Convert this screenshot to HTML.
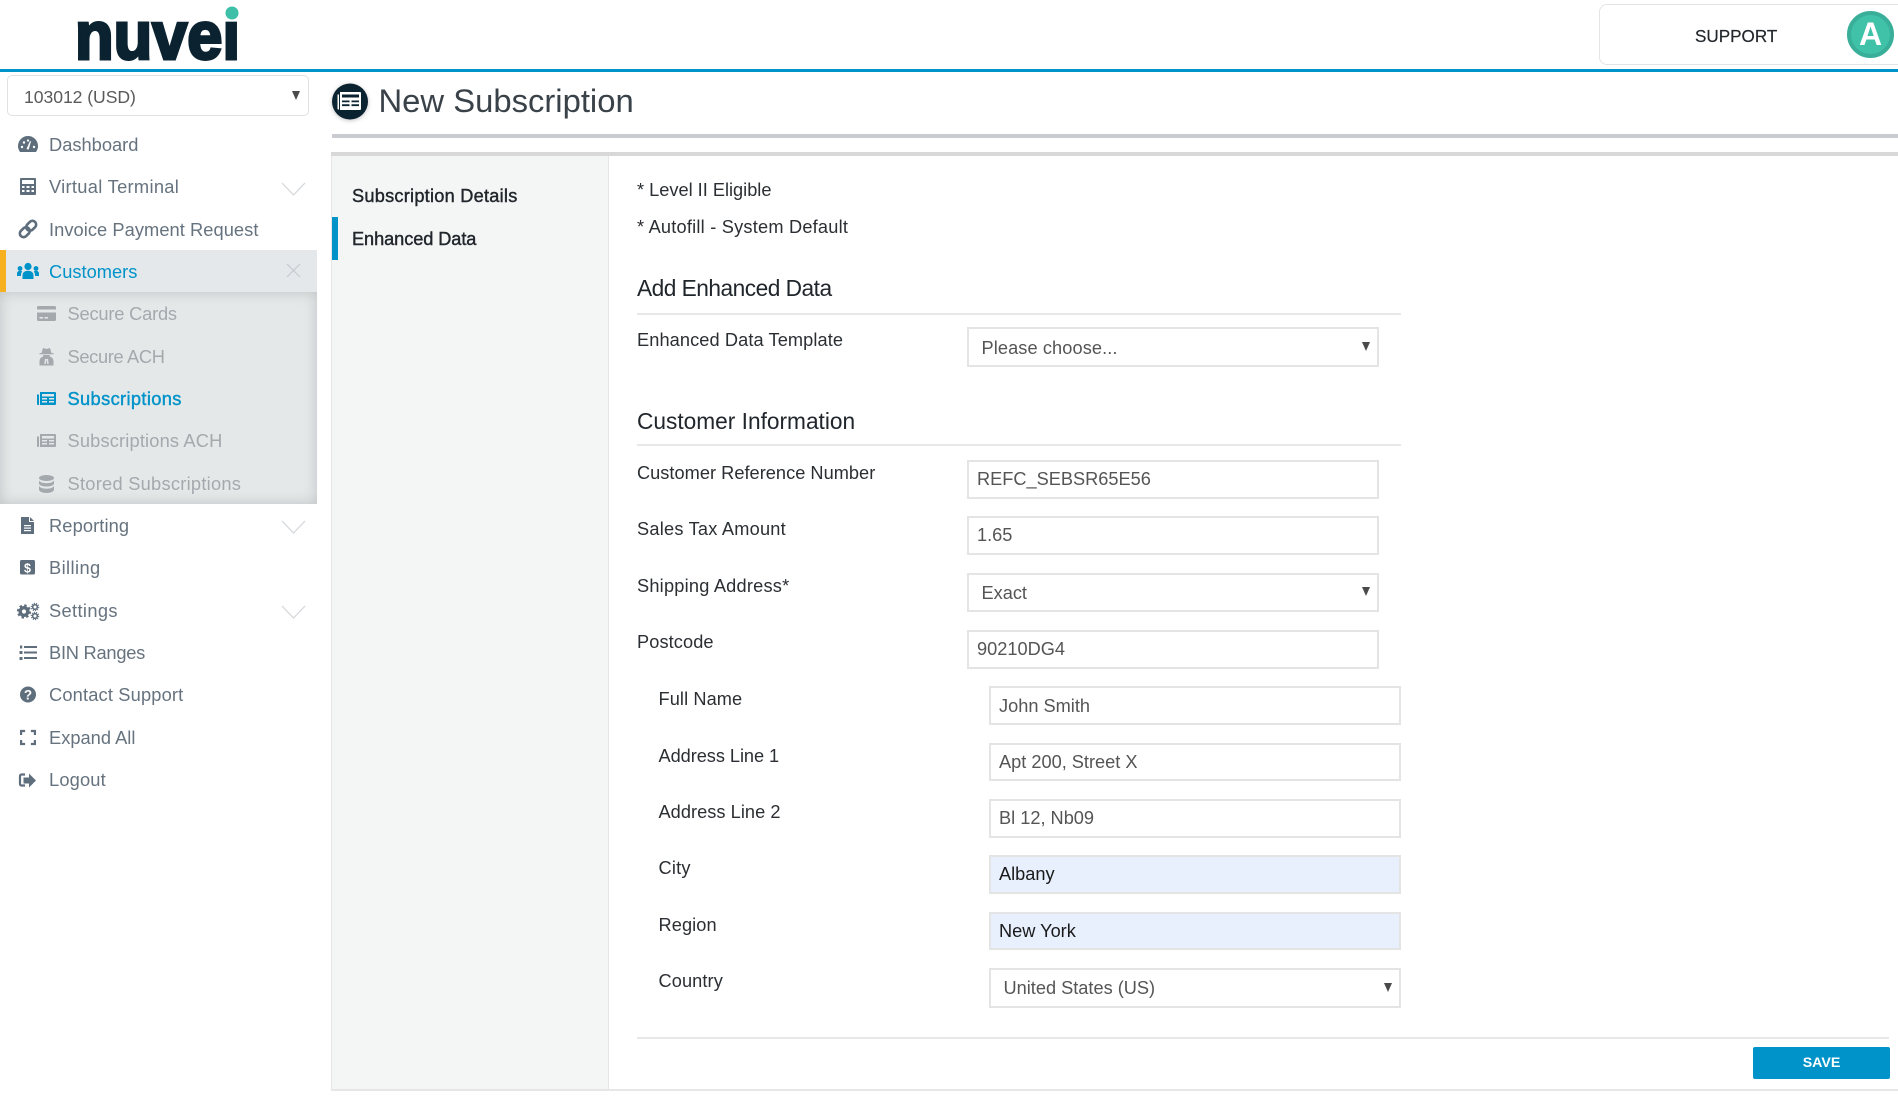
<!DOCTYPE html>
<html lang="en"><head><meta charset="utf-8"><title>New Subscription</title>
<style>
html,body{margin:0;padding:0;background:#fff;width:1898px;height:1116px;overflow:hidden}
body{position:relative;font-family:"Liberation Sans",Arial,sans-serif;font-size:18.2px;color:#2b2f33}
div{position:absolute;box-sizing:border-box;white-space:nowrap}
.t{line-height:24px;height:24px}
.n{left:49px;color:#66737f;line-height:24px;height:24px;font-size:18.3px}
.s{left:67.5px;color:#a3a9ad;line-height:24px;height:24px;font-size:18.3px}
.l{left:637px;color:#2b2f33;line-height:24px;height:24px}
.l2{left:658.5px;color:#2b2f33;line-height:24px;height:24px}
.f{left:967px;width:412px;border:2px solid #e4e4e4;background:#fff;color:#555;line-height:34px}
.f2{left:989px;width:412px;border:2px solid #e4e4e4;background:#fff;color:#555;line-height:34px}
.f span,.f2 span{position:absolute;left:8px;top:0}
.sel span{left:12.5px;top:1px}
.auto{background:#e8f0fe;color:#1a1a1a}
.r{height:2px;background:#e8e8e8}
.h{left:637px;font-size:22.7px;color:#20262b;line-height:28px;height:28px}
.a{width:0;height:0;border-left:4.5px solid transparent;border-right:4.5px solid transparent;border-top:9px solid #4a4a4a}
svg{position:absolute;left:0;top:0}
</style></head><body>

<!-- sidebar backgrounds -->
<div style="left:0;top:250px;width:317px;height:42px;background:#e4e8eb"></div>
<div style="left:0;top:250px;width:6px;height:42px;background:#f7b01f"></div>
<div style="left:0;top:292px;width:317px;height:212px;background:#e4e8e9;box-shadow:inset 0 0 14px rgba(0,0,0,.16)"></div>

<!-- header -->
<div style="left:0;top:69px;width:1898px;height:3px;background:#0093c9"></div>
<div style="left:1599px;top:4px;width:320px;height:61px;border:1.5px solid #e4e4e4;border-radius:8px;background:#fff"></div>
<div class="t" style="left:1695px;top:25px;font-size:17.1px;color:#22272b;-webkit-text-stroke:.2px #22272b">SUPPORT</div>
<div style="left:1847px;top:11px;width:47px;height:47px;border-radius:50%;background:#40c2a9;border:4px solid #39ae99;color:#fff;font-size:32px;line-height:39px;text-align:center;font-weight:bold">A</div>

<!-- account select -->
<div style="left:7px;top:75px;width:302px;height:41px;border:1.5px solid #e1e1e1;border-radius:5px;background:#fff"></div>
<div class="t" style="left:24px;top:84.500px;color:#5a5a5a;font-size:17.6px;letter-spacing:-.05px">103012 (USD)</div>
<div class="a" style="left:292px;top:91px"></div>

<!-- sidebar text -->
<div class="n" style="top:133px">Dashboard</div>
<div class="n" style="top:175px;letter-spacing:.3px">Virtual Terminal</div>
<div class="n" style="top:218px;letter-spacing:.05px">Invoice Payment Request</div>
<div class="n" style="top:260px;color:#0093c9">Customers</div>
<div class="s" style="top:302px;letter-spacing:-.2px">Secure Cards</div>
<div class="s" style="top:345px;letter-spacing:-.35px">Secure ACH</div>
<div class="s" style="top:387px;color:#0093c9;-webkit-text-stroke:.4px #0093c9;letter-spacing:.35px">Subscriptions</div>
<div class="s" style="top:429px;letter-spacing:.15px">Subscriptions ACH</div>
<div class="s" style="top:472px;letter-spacing:.25px">Stored Subscriptions</div>
<div class="n" style="top:514px;letter-spacing:.1px">Reporting</div>
<div class="n" style="top:556px;letter-spacing:.4px">Billing</div>
<div class="n" style="top:599px;letter-spacing:.35px">Settings</div>
<div class="n" style="top:641px;letter-spacing:-.25px">BIN Ranges</div>
<div class="n" style="top:683px;letter-spacing:.15px">Contact Support</div>
<div class="n" style="top:726px">Expand All</div>
<div class="n" style="top:768px;letter-spacing:.15px">Logout</div>

<!-- title -->
<div style="left:378.500px;top:80px;font-size:32.8px;line-height:42px;height:42px;color:#3a4249">New Subscription</div>
<div style="left:332px;top:134px;width:1566px;height:4px;background:#c9ccd0"></div>

<!-- panel -->
<div style="left:331px;top:152px;width:1567px;height:4px;background:#d8d8d8"></div>
<div style="left:331px;top:156px;width:278px;height:934px;background:#f4f5f5;border-left:1px solid #e6e6e6;border-right:1px solid #e6e6e6"></div>
<div style="left:332px;top:217px;width:6px;height:43px;background:#0093c9"></div>
<div class="t" style="left:352px;top:184px;color:#20262b;-webkit-text-stroke:.4px #20262b;letter-spacing:.24px">Subscription Details</div>
<div class="t" style="left:352px;top:227px;color:#20262b;-webkit-text-stroke:.4px #20262b;letter-spacing:-.08px">Enhanced Data</div>
<div style="left:331px;top:1089px;width:1567px;height:2px;background:#e6e6e6"></div>

<!-- content -->
<div class="l" style="top:177.500px">* Level II Eligible</div>
<div class="l" style="top:215px;letter-spacing:.22px">* Autofill - System Default</div>

<div class="h" style="top:274px;letter-spacing:-.5px">Add Enhanced Data</div>
<div class="r" style="left:637px;top:313px;width:764px"></div>
<div class="l" style="top:328px;letter-spacing:.1px">Enhanced Data Template</div>
<div class="f sel" style="top:327px;height:40px"><span style="top:2px;letter-spacing:.1px">Please choose...</span></div>
<div class="a" style="left:1362px;top:342px"></div>

<div class="h" style="top:407px">Customer Information</div>
<div class="r" style="left:637px;top:444px;width:764px"></div>

<div class="l" style="top:461px;letter-spacing:.03px">Customer Reference Number</div>
<div class="f" style="top:460px;height:39px"><span>REFC_SEBSR65E56</span></div>
<div class="l" style="top:517px;letter-spacing:.23px">Sales Tax Amount</div>
<div class="f" style="top:516px;height:39px"><span>1.65</span></div>
<div class="l" style="top:573.500px;letter-spacing:.22px">Shipping Address*</div>
<div class="f sel" style="top:573px;height:39px"><span>Exact</span></div>
<div class="a" style="left:1362px;top:587px"></div>
<div class="l" style="top:630px;letter-spacing:.1px">Postcode</div>
<div class="f" style="top:630px;height:39px"><span>90210DG4</span></div>

<div class="l2" style="top:686.500px;letter-spacing:.1px">Full Name</div>
<div class="f2" style="top:686px;height:39px"><span style="top:1px">John Smith</span></div>
<div class="l2" style="top:744px;letter-spacing:-.05px">Address Line 1</div>
<div class="f2" style="top:743px;height:38px"><span>Apt 200, Street X</span></div>
<div class="l2" style="top:800px;letter-spacing:.05px">Address Line 2</div>
<div class="f2" style="top:799px;height:39px"><span>Bl 12, Nb09</span></div>
<div class="l2" style="top:856px;letter-spacing:.2px">City</div>
<div class="f2 auto" style="top:855px;height:39px"><span>Albany</span></div>
<div class="l2" style="top:913px;letter-spacing:.1px">Region</div>
<div class="f2 auto" style="top:912px;height:38px"><span>New York</span></div>
<div class="l2" style="top:969px;letter-spacing:.1px">Country</div>
<div class="f2 sel" style="top:968px;height:40px"><span>United States (US)</span></div>
<div class="a" style="left:1384px;top:983px"></div>

<div class="r" style="left:637px;top:1037px;width:1252px"></div>
<div style="left:1753px;top:1047px;width:137px;height:32px;background:#0093c9;border-radius:2px;color:#fff;font-weight:bold;font-size:14.2px;line-height:32px;text-align:center">SAVE</div>

<!-- logo + icons -->
<svg width="1898" height="1116" viewBox="0 0 1898 1116" xmlns="http://www.w3.org/2000/svg">
  <!-- logo -->
  <text x="75" y="59" font-family="Liberation Sans" font-weight="bold" font-size="68" textLength="165" lengthAdjust="spacingAndGlyphs" fill="#0b2230" stroke="#0b2230" stroke-width="3">nuvei</text>
  <rect x="218" y="0" width="24" height="21" fill="#fff"/>
  <ellipse cx="232" cy="13" rx="6.500" ry="6.500" fill="#3dbfa8"/>

  <g fill="#5f6e7c">
    <!-- dashboard -->
    <path d="M20 152a10 10 0 1 1 16 0z"/>
    <g fill="#fff"><circle cx="22" cy="147" r="1.200"/><circle cx="24" cy="142.500" r="1.200"/><circle cx="34" cy="147" r="1.200"/><circle cx="28" cy="140.500" r="1.100"/><path d="M26.500 149l3.500-8 1 .4-2.400 8.200z"/></g>
    <!-- calculator -->
    <path fill-rule="evenodd" d="M21 178h14a1 1 0 0 1 1 1v15a1 1 0 0 1-1 1H21a1 1 0 0 1-1-1v-15a1 1 0 0 1 1-1zm1 2v4h12v-4zm0 6v2h2.500v-2zm4.500 0v2h3v-2zm5 0v2H34v-2zm-9.500 4v2h2.500v-2zm4.500 0v2h3v-2zm5 0v2H34v-2z"/>
    <!-- link -->
    <g fill="none" stroke="#5f6e7c" stroke-width="2.600" transform="rotate(-45 28 229)"><rect x="18" y="225.300" width="11" height="7.400" rx="3.700"/><rect x="27" y="225.300" width="11" height="7.400" rx="3.700"/></g>
    <!-- file -->
    <path d="M21 517h8v5h5v12H21z"/><path d="M30 517l4 4h-4z"/><g fill="#fff"><rect x="24" y="525" width="7" height="1.200"/><rect x="24" y="527.500" width="7" height="1.200"/><rect x="24" y="530" width="7" height="1.200"/></g>
    <!-- billing -->
    <rect x="20" y="560" width="15" height="14.500" rx="1.500"/>
    <text x="27.500" y="572.500" font-family="Liberation Sans" font-weight="bold" font-size="12.500" text-anchor="middle" fill="#fff">$</text>
    <!-- list -->
    <g><rect x="24" y="646" width="13" height="2"/><rect x="24" y="651.500" width="13" height="2"/><rect x="24" y="657" width="13" height="2"/><rect x="20" y="645.500" width="2.200" height="3"/><rect x="19.500" y="651" width="3" height="3"/><rect x="19.500" y="657" width="3" height="3"/></g>
    <!-- question -->
    <circle cx="28" cy="694.500" r="8"/>
    <text x="28" y="699.500" font-family="Liberation Sans" font-weight="bold" font-size="13.500" text-anchor="middle" fill="#fff">?</text>
    <!-- expand -->
    <path fill="none" stroke="#5f6e7c" stroke-width="2.200" d="M21.100 735v-4h4M30.900 731h4v4M34.900 740v4h-4M25.100 744h-4v-4"/>
    <!-- logout -->
    <path fill="none" stroke="#5f6e7c" stroke-width="2.200" d="M25 774.500h-3.500a1.500 1.500 0 0 0-1.500 1.500v8a1.500 1.500 0 0 0 1.500 1.500H25"/>
    <path d="M23.500 777.500h5.500v-4l7 7-7 7v-4h-5.500z"/>
  </g>
  <!-- cogs -->
  <g fill="none" stroke="#5f6e7c">
    <circle cx="24" cy="611.500" r="3.800" stroke-width="3.400"/>
    <circle cx="24" cy="611.500" r="6" stroke-width="2.200" stroke-dasharray="2.400 2.312"/>
    <circle cx="35" cy="607" r="2.300" stroke-width="1.600"/>
    <circle cx="35" cy="607" r="3.700" stroke-width="1.100" stroke-dasharray="1.200 1.100"/>
    <circle cx="35" cy="616" r="2.300" stroke-width="1.600"/>
    <circle cx="35" cy="616" r="3.700" stroke-width="1.100" stroke-dasharray="1.200 1.100"/>
  </g>
  <!-- users -->
  <g fill="#0093c9">
    <circle cx="28" cy="266.500" r="3.600"/><circle cx="20" cy="268.500" r="2.400"/><circle cx="36" cy="268.500" r="2.400"/>
    <path d="M22.500 279v-3.500c0-3 2-4.800 5.500-4.800s5.500 1.800 5.500 4.800v3.500z"/>
    <path d="M17 276v-2.500c0-1.500 1-2.600 3-2.600 1 0 1.600.2 2.200.7-.9 1-1.300 2.300-1.300 4.400zM39 276v-2.500c0-1.500-1-2.600-3-2.600-1 0-1.600.2-2.200.7.900 1 1.300 2.300 1.300 4.400z"/>
  </g>
  <!-- sub icons -->
  <g fill="#a3a9ad">
    <path fill-rule="evenodd" d="M38.500 306h16a1.500 1.500 0 0 1 1.500 1.500v2H37v-2a1.500 1.500 0 0 1 1.500-1.500zM37 312.500h19v7a1.500 1.500 0 0 1-1.500 1.500h-16a1.500 1.500 0 0 1-1.500-1.500zm2.500 4.500v1.500h3.500V317zm5 0v1.500h3.500V317z"/>
    <g transform="translate(0 9.500)">
    <path d="M43 338.500l3.500 1 3.500-1 1.400 5h2.100v1.200h-14v-1.200h2.100z"/>
    <path fill-rule="evenodd" d="M39.500 356v-4c0-3 2-4.600 4-5.100l-.6-1.400h7.200l-.6 1.400c2 .5 4 2.100 4 5.100v4zM45 349.500l-.7 5h1.400l.8-4.500.8 4.500h1.400l-.7-5z"/>
    </g>
    <path fill-rule="evenodd" d="M40 434h15a1 1 0 0 1 1 1v11a1 1 0 0 1-1 1H40zm2 2v2.500h12V436zm0 4v1.500h5V440zm7 0v1.500h5V440zm-7 3v1.500h5V443zm7 0v1.500h5V443zM37 436.500h2V447h-1a1 1 0 0 1-1-1z"/>
    <ellipse cx="46.500" cy="478" rx="7.500" ry="3"/>
    <path d="M39 480.500c1 1.800 4 2.700 7.500 2.700s6.500-.9 7.500-2.700v3c0 1.700-3.300 3-7.500 3s-7.500-1.300-7.500-3zM39 486c1 1.800 4 2.700 7.500 2.700s6.500-.9 7.500-2.700v3.500c0 1.900-3.300 3.500-7.500 3.500s-7.500-1.600-7.500-3.500z"/>
  </g>
  <path fill="#0093c9" fill-rule="evenodd" d="M40 392h15a1 1 0 0 1 1 1v11a1 1 0 0 1-1 1H40zm2 2v2.500h12V394zm0 4v1.500h5V398zm7 0v1.500h5V398zm-7 3v1.500h5V401zm7 0v1.500h5V401zM37 394.500h2V405h-1a1 1 0 0 1-1-1z"/>
  <!-- chevrons and close -->
  <g fill="none" stroke="#d3d6d9" stroke-width="1.200">
    <path d="M282 183l11.500 12L305 183M282 521l11.500 12 11.500-12M282 606l11.500 12 11.500-12"/>
    <path stroke="#c6cace" d="M287 264l13 13M300 264l-13 13"/>
  </g>
  <!-- title icon -->
  <circle cx="350" cy="101.500" r="18" fill="#0b2230" style="filter:drop-shadow(0 1px 2px rgba(0,0,0,.25))"/>
  <path fill="#fff" fill-rule="evenodd" d="M340 92h20a1 1 0 0 1 1 1v16a1 1 0 0 1-1 1h-20zm2 2.500v3h17v-3zm0 6v1.800h7.500v-1.800zm9.500 0v1.800h7.500v-1.800zm-9.500 3.800v1.800h7.500v-1.800zm9.500 0v1.800h7.500v-1.800zM337.500 94.500h1.500v15h-1a1 1 0 0 1-.5-1z"/>
</svg>
</body></html>
